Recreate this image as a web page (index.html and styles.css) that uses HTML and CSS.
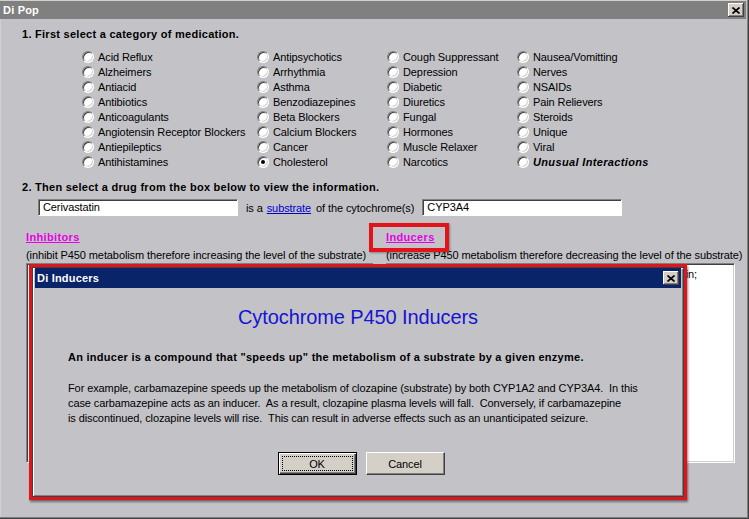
FILE: index.html
```html
<!DOCTYPE html>
<html>
<head>
<meta charset="utf-8">
<title>Di Pop</title>
<link rel="stylesheet" href="styles.css">
</head>
<body>
<div class="window">
  <div class="titlebar">
    <span class="title">Di Pop</span>
    <span class="xbtn"><svg width="8" height="7" viewBox="0 0 8 7"><path d="M0.5 0.5 L7.5 6.5 M7.5 0.5 L0.5 6.5" stroke="#000" stroke-width="1.7" fill="none"/></svg></span>
  </div>
  <div class="content">
    <div class="step">1. First select a category of medication.</div>
    <div class="radios">
      <label class="opt"><span class="radio"></span>Acid Reflux</label>
      <label class="opt"><span class="radio"></span>Alzheimers</label>
      <label class="opt"><span class="radio"></span>Antiacid</label>
      <label class="opt"><span class="radio"></span>Antibiotics</label>
      <label class="opt"><span class="radio"></span>Anticoagulants</label>
      <label class="opt"><span class="radio"></span>Angiotensin Receptor Blockers</label>
      <label class="opt"><span class="radio"></span>Antiepileptics</label>
      <label class="opt"><span class="radio"></span>Antihistamines</label>
      <label class="opt"><span class="radio"></span>Antipsychotics</label>
      <label class="opt"><span class="radio"></span>Arrhythmia</label>
      <label class="opt"><span class="radio"></span>Asthma</label>
      <label class="opt"><span class="radio"></span>Benzodiazepines</label>
      <label class="opt"><span class="radio"></span>Beta Blockers</label>
      <label class="opt"><span class="radio"></span>Calcium Blockers</label>
      <label class="opt"><span class="radio"></span>Cancer</label>
      <label class="opt"><span class="radio checked"></span>Cholesterol</label>
      <label class="opt"><span class="radio"></span>Cough Suppressant</label>
      <label class="opt"><span class="radio"></span>Depression</label>
      <label class="opt"><span class="radio"></span>Diabetic</label>
      <label class="opt"><span class="radio"></span>Diuretics</label>
      <label class="opt"><span class="radio"></span>Fungal</label>
      <label class="opt"><span class="radio"></span>Hormones</label>
      <label class="opt"><span class="radio"></span>Muscle Relaxer</label>
      <label class="opt"><span class="radio"></span>Narcotics</label>
      <label class="opt"><span class="radio"></span>Nausea/Vomitting</label>
      <label class="opt"><span class="radio"></span>Nerves</label>
      <label class="opt"><span class="radio"></span>NSAIDs</label>
      <label class="opt"><span class="radio"></span>Pain Relievers</label>
      <label class="opt"><span class="radio"></span>Steroids</label>
      <label class="opt"><span class="radio"></span>Unique</label>
      <label class="opt"><span class="radio"></span>Viral</label>
      <label class="opt"><span class="radio"></span><span class="unusual">Unusual Interactions</span></label>
    </div>
    <div class="step step2">2. Then select a drug from the box below to view the information.</div>
    <div class="drugrow">
      <div class="field">Cerivastatin</div>
      <span class="is-a">is a</span>
      <a class="link">substrate</a>
      <span class="of-the">of the cytochrome(s)</span>
      <div class="field field-cyp">CYP3A4</div>
    </div>
    <div class="panes">
      <div class="pane">
        <a class="pane-head">Inhibitors</a>
        <div class="pane-desc">(inhibit P450 metabolism therefore increasing the level of the substrate)</div>
        <div class="listbox listbox-left"></div>
      </div>
      <div class="pane">
        <a class="pane-head">Inducers</a>
        <div class="pane-desc">(increase P450 metabolism therefore decreasing the level of the substrate)</div>
        <div class="listbox listbox-right"><div class="list-line">Phenobarbital; Phenytoin; Rifampin;</div></div>
      </div>
    </div>
  </div>

  <div class="highlight"></div>

  <div class="callout">
    <div class="dialog">
      <div class="dlg-title">
        <span>Di Inducers</span>
        <span class="xbtn"><svg width="8" height="7" viewBox="0 0 8 7"><path d="M0.5 0.5 L7.5 6.5 M7.5 0.5 L0.5 6.5" stroke="#000" stroke-width="1.7" fill="none"/></svg></span>
      </div>
      <div class="dlg-heading">Cytochrome P450 Inducers</div>
      <div class="dlg-lead">An inducer is a compound that "speeds up" the metabolism of a substrate by a given enzyme.</div>
      <div class="dlg-text">For example, carbamazepine speeds up the metabolism of clozapine (substrate) by both CYP1A2 and CYP3A4.&nbsp; In this<br>case carbamazepine acts as an inducer.&nbsp; As a result, clozapine plasma levels will fall.&nbsp; Conversely, if carbamazepine<br>is discontinued, clozapine levels will rise.&nbsp; This can result in adverse effects such as an unanticipated seizure.</div>
      <div class="dlg-buttons">
        <div class="btn btn-default"><span class="focus">OK</span></div>
        <div class="btn">Cancel</div>
      </div>
    </div>
  </div>
</div>
</body>
</html>
```

FILE: styles.css
```css
html, body {
  margin: 0;
  padding: 0;
  background: #c3c3c7;
}

body {
  font-family: "Liberation Sans", Arial, sans-serif;
  font-size: 11px;
  letter-spacing: -0.1px;
  color: #000;
}

.window {
  position: relative;
  width: 749px;
  height: 519px;
  box-sizing: border-box;
  background: #c3c3c7;
  overflow: hidden;
  box-shadow: inset -1px -1px 0 #404040, inset -2px -2px 0 #808080, inset 1px 1px 0 #d4d0c8;
}

.titlebar {
  height: 18px;
  margin: 1px 3px 0 0;
  background: #808080;
  display: flex;
  align-items: center;
  justify-content: space-between;
}

.title {
  color: #fff;
  font-weight: bold;
  letter-spacing: 0.2px;
  padding-left: 3px;
}

.xbtn {
  width: 16px;
  height: 14px;
  box-sizing: border-box;
  margin-right: 2px;
  background: #d4d0c8;
  display: flex;
  align-items: center;
  justify-content: center;
  box-shadow: inset -1px -1px 0 #404040, inset 1px 1px 0 #fff, inset -2px -2px 0 #808080;
}

.content {
  padding-left: 22px;
}

.step {
  font-weight: bold;
  letter-spacing: 0.27px;
  line-height: 14px;
  margin-top: 8px;
  white-space: nowrap;
}

.step2 {
  margin-top: 11px;
}

.radios {
  display: grid;
  grid-template-columns: 175px 130px 130px auto;
  grid-template-rows: repeat(8, 15px);
  grid-auto-flow: column;
  margin: 8px 0 0 60px;
}

.opt {
  display: flex;
  align-items: center;
  gap: 4px;
  white-space: nowrap;
}

.radio {
  position: relative;
  width: 12px;
  height: 12px;
  box-sizing: border-box;
  border-radius: 50%;
  background: #fff;
  border: 1px solid;
  border-color: #808080 #ffffff #ffffff #808080;
  box-shadow: inset 1px 1px 0 #404040, inset -1px -1px 0 #d4d0c8;
  flex: none;
}

.radio.checked::after {
  content: "";
  position: absolute;
  left: 3px;
  top: 3px;
  width: 4px;
  height: 4px;
  border-radius: 50%;
  background: #000;
}

.unusual {
  font-weight: bold;
  font-style: italic;
  letter-spacing: 0.35px;
}

.drugrow {
  display: flex;
  align-items: center;
  height: 17px;
  margin: 5px 0 0 16px;
  white-space: nowrap;
}

.field {
  width: 200px;
  height: 17px;
  box-sizing: border-box;
  background: #fff;
  border: 1px solid;
  border-color: #808080 #ffffff #ffffff #808080;
  box-shadow: inset 1px 1px 0 #404040;
  padding-left: 4px;
  line-height: 15px;
}

.is-a {
  margin-left: 8px;
}

.link {
  margin-left: 4px;
  color: #0000cc;
  text-decoration: underline;
}

.of-the {
  margin-left: 5px;
}

.field-cyp {
  margin-left: 8px;
}

.panes {
  display: grid;
  grid-template-columns: 360px 349px;
  margin: 14px 0 0 4px;
}

.pane-head {
  display: block;
  width: max-content;
  font-weight: bold;
  letter-spacing: 0.35px;
  color: #e600e6;
  text-decoration: underline;
  line-height: 14px;
}

.pane-desc {
  margin-top: 4px;
  line-height: 14px;
  white-space: nowrap;
}

.listbox {
  height: 200px;
  margin-top: 1px;
  box-sizing: border-box;
  background: #fff;
  border: 1px solid;
  border-color: #808080 #ffffff #ffffff #808080;
  box-shadow: inset 1px 1px 0 #404040, inset -1px -1px 0 #d4d0c8;
}

.listbox-left {
  width: 348px;
}

.listbox-right {
  width: 349px;
  padding: 3px 37px 0 0;
}

.list-line {
  text-align: right;
  line-height: 14px;
  white-space: nowrap;
}

.highlight {
  position: absolute;
  left: 369px;
  top: 223px;
  width: 80px;
  height: 29px;
  box-sizing: border-box;
  border: 4px solid #e2141b;
  box-shadow: 1px 1px 2px rgba(0, 0, 0, 0.35);
}

.callout {
  position: absolute;
  left: 29px;
  top: 264px;
  border: 3px solid #e2141b;
  box-shadow: 1px 2px 2px rgba(0, 0, 0, 0.45);
}

.dialog {
  width: 652px;
  height: 230px;
  box-sizing: border-box;
  background: #c3c3c7;
  border: 1px solid #404040;
  box-shadow: inset 1px 1px 0 #ffffff, inset -1px -1px 0 #808080;
  padding: 0 2px 2px 2px;
  display: flex;
  flex-direction: column;
}

.dlg-title {
  height: 20px;
  flex: none;
  background: #0a246a;
  color: #fff;
  font-weight: bold;
  letter-spacing: 0.2px;
  padding-left: 2px;
  display: flex;
  align-items: center;
  justify-content: space-between;
}

.dlg-heading {
  margin-top: 17px;
  font-size: 20px;
  letter-spacing: -0.1px;
  line-height: 24px;
  color: #1414d2;
  text-align: center;
}

.dlg-lead {
  margin: 21px 0 0 33px;
  font-weight: bold;
  letter-spacing: 0.27px;
  line-height: 14px;
  white-space: nowrap;
}

.dlg-text {
  margin: 17px 0 0 33px;
  line-height: 15px;
  white-space: nowrap;
}

.dlg-buttons {
  display: flex;
  justify-content: center;
  gap: 9px;
  margin-top: 26px;
  padding-left: 6px;
}

.btn {
  width: 79px;
  height: 23px;
  box-sizing: border-box;
  background: #d4d0c8;
  border: 1px solid;
  border-color: #ffffff #404040 #404040 #ffffff;
  box-shadow: inset -1px -1px 0 #808080;
  display: flex;
  align-items: center;
  justify-content: center;
}

.btn-default {
  border: 1px solid #000;
  box-shadow: inset 1px 1px 0 #ffffff, inset -1px -1px 0 #404040, inset -2px -2px 0 #808080;
  padding: 3px;
}

.focus {
  flex: 1;
  align-self: stretch;
  display: flex;
  align-items: center;
  justify-content: center;
  border: 1px dotted #000;
}
```
